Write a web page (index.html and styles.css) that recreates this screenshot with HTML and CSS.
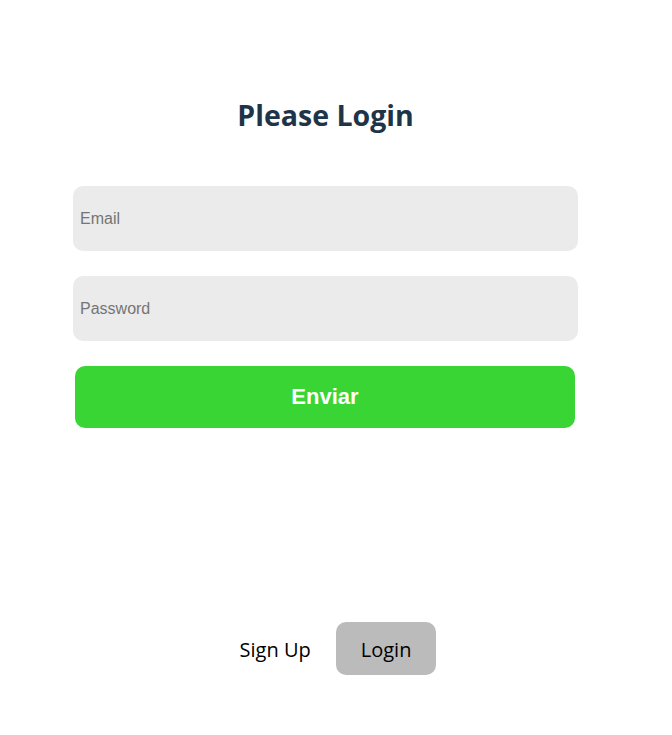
FILE: index.html
```html
<!DOCTYPE html>
<html>
<head>
<meta charset="utf-8">
<link rel="stylesheet" href="styles.css">
</head>
<body>
<div class="page">
  <h1 class="title">Please Login</h1>
  <form class="form">
    <input class="field" type="email" placeholder="Email">
    <input class="field" type="password" placeholder="Password">
    <button class="submit" type="button">Enviar</button>
  </form>
  <nav class="switch">
    <button class="tab" type="button">Sign Up</button>
    <button class="tab active" type="button">Login</button>
  </nav>
</div>
</body>
</html>
```
FILE: styles.css
```css
html, body {
  margin: 0;
  padding: 0;
  background: #ffffff;
}
.page {
  width: 505px;
  margin-left: 73px;
  padding-top: 96px;
  display: flex;
  flex-direction: column;
}
.title {
  margin: 0 0 52px;
  text-align: center;
  font-family: "Open Sans", "Noto Sans", sans-serif;
  font-weight: 700;
  font-size: 28.5px;
  line-height: 38px;
  color: #1e3448;
}
.form {
  display: flex;
  flex-direction: column;
  gap: 26px;
  align-items: flex-start;
}
.field {
  box-sizing: border-box;
  width: 505px;
  height: 65px;
  border: none;
  border-radius: 10px;
  background: #ebebeb;
  padding: 0 7px;
  font-family: "Liberation Sans", Arial, sans-serif;
  font-size: 16px;
  color: #333;
  outline: none;
}
.field + .field {
  margin-top: -1px;
}
.field::placeholder {
  color: #757575;
}
.submit {
  width: 500px;
  height: 62px;
  margin-left: 2px;
  margin-top: -1px;
  border: none;
  border-radius: 10px;
  background: #39d535;
  color: #ffffff;
  font-family: "Liberation Sans", Arial, sans-serif;
  font-weight: 700;
  font-size: 22px;
  cursor: pointer;
}
.switch {
  margin-top: 194px;
  display: flex;
  justify-content: center;
}
.tab {
  height: 53px;
  padding: 2px 25px 0;
  border: none;
  border-radius: 10px;
  background: transparent;
  font-family: "Open Sans", "Noto Sans", sans-serif;
  font-weight: 500;
  font-size: 20px;
  color: #000000;
  cursor: pointer;
}
.tab.active {
  background: #bbbbbb;
}
```
